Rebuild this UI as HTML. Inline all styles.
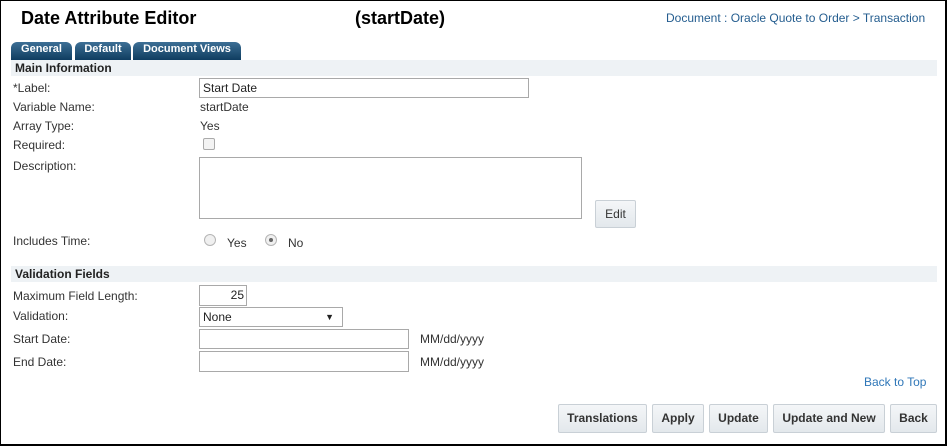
<!DOCTYPE html>
<html><head><style>
*{box-sizing:border-box;margin:0;padding:0}
body{width:947px;height:446px;background:#fff;font-family:"Liberation Sans",Arial,sans-serif;font-size:12px;color:#333;position:relative;overflow:hidden}
.frame{position:absolute;left:0;top:0;width:947px;height:446px;border:2px solid #000;border-left-width:1px;border-top-width:1px}
.a{position:absolute;white-space:nowrap}
.tab{position:absolute;top:42px;height:18px;border-radius:6px 6px 0 0;background:linear-gradient(#3d6f95,#0f3d60);color:#fff;font-weight:bold;font-size:11px;text-align:center;line-height:15px}
.band{position:absolute;left:11px;width:926px;height:16px;background:#eef2f5;font-weight:bold;font-size:12px;padding-left:4px;line-height:16px;color:#222}
.inp{position:absolute;border:1px solid #a9a9a9;background:#fff;padding-left:3px;font-size:12px}
.btn{position:absolute;top:404px;height:29px;border:1px solid #c9d0d6;border-radius:2px;background:linear-gradient(#f4f6f8,#e3e8ec);font-weight:bold;font-size:12px;color:#333;text-align:center;line-height:27px}
.rad{position:absolute;width:12px;height:12px;border-radius:50%;border:1px solid #b5b5b5;background:#f0f0f0}
</style></head><body>
<div class="frame"></div>
<div class="a" style="left:21px;top:8px;font-size:18px;font-weight:bold;color:#000">Date Attribute Editor</div>
<div class="a" style="left:355px;top:8px;font-size:18px;font-weight:bold;color:#000">(startDate)</div>
<div class="a" style="left:666px;top:11px;color:#245d8f">Document : Oracle Quote to Order &gt; Transaction</div>
<div class="tab" style="left:11px;width:61px">General</div>
<div class="tab" style="left:75px;width:56px">Default</div>
<div class="tab" style="left:133px;width:108px">Document Views</div>
<div class="band" style="top:60px">Main Information</div>
<div class="a" style="left:13px;top:81px">*Label:</div>
<div class="inp" style="left:199px;top:78px;width:330px;height:20px;line-height:18px;color:#222">Start Date</div>
<div class="a" style="left:13px;top:100px">Variable Name:</div>
<div class="a" style="left:200px;top:100px">startDate</div>
<div class="a" style="left:13px;top:119px">Array Type:</div>
<div class="a" style="left:200px;top:119px">Yes</div>
<div class="a" style="left:13px;top:138px">Required:</div>
<div class="a" style="left:203px;top:138px;width:12px;height:12px;border:1px solid #aaa;border-radius:2px;background:#f3f3f3"></div>
<div class="a" style="left:13px;top:159px">Description:</div>
<div class="inp" style="left:199px;top:157px;width:383px;height:62px"></div>
<div class="btn" style="left:595px;top:200px;width:41px;height:28px;font-weight:normal">Edit</div>
<div class="a" style="left:13px;top:234px">Includes Time:</div>
<div class="rad" style="left:204px;top:234px"></div>
<div class="a" style="left:227px;top:236px">Yes</div>
<div class="rad" style="left:265px;top:234px"><div style="position:absolute;left:3px;top:3px;width:4px;height:4px;border-radius:50%;background:#666"></div></div>
<div class="a" style="left:288px;top:236px">No</div>
<div class="band" style="top:266px">Validation Fields</div>
<div class="a" style="left:13px;top:289px">Maximum Field Length:</div>
<div class="inp" style="left:199px;top:285px;width:48px;height:21px;text-align:right;padding-right:2px;line-height:19px;color:#222">25</div>
<div class="a" style="left:13px;top:309px">Validation:</div>
<div class="inp" style="left:199px;top:307px;width:144px;height:20px;line-height:18px;color:#222">None<span style="position:absolute;right:8px;font-size:9px">▼</span></div>
<div class="a" style="left:13px;top:332px">Start Date:</div>
<div class="inp" style="left:199px;top:329px;width:210px;height:20px"></div>
<div class="a" style="left:420px;top:332px">MM/dd/yyyy</div>
<div class="a" style="left:13px;top:355px">End Date:</div>
<div class="inp" style="left:199px;top:351px;width:210px;height:21px"></div>
<div class="a" style="left:420px;top:355px">MM/dd/yyyy</div>
<div class="a" style="left:864px;top:375px;color:#2f77b8">Back to Top</div>
<div class="btn" style="left:558px;width:89px">Translations</div>
<div class="btn" style="left:652px;width:52px">Apply</div>
<div class="btn" style="left:709px;width:59px">Update</div>
<div class="btn" style="left:773px;width:112px">Update and New</div>
<div class="btn" style="left:890px;width:47px">Back</div>
</body></html>
